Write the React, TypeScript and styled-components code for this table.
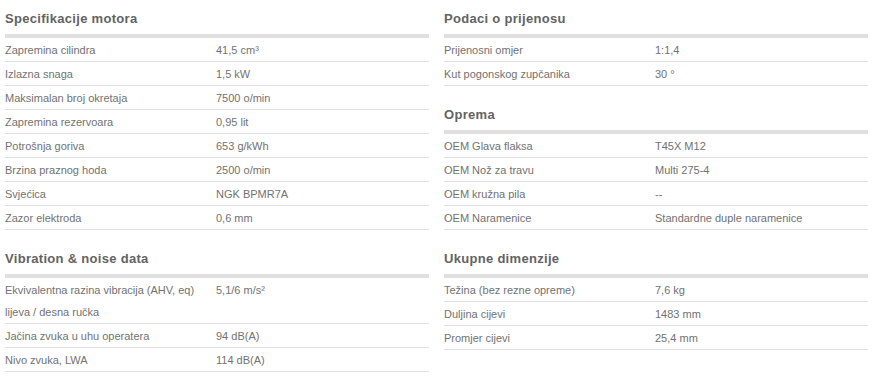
import React from "react";
import styled, { createGlobalStyle } from "styled-components";

const Global = createGlobalStyle`
  html, body { margin: 0; padding: 0; background: #ffffff; }
  body { font-family: "Liberation Sans", Arial, sans-serif; }
`;

const Page = styled.div`
  display: grid;
  grid-template-columns: 424px 424px;
  column-gap: 15px;
  padding: 0 5px;
  align-items: start;
`;

const Column = styled.div`
  display: flex;
  flex-direction: column;
  gap: 10px;
`;

const Section = styled.section`
  display: flex;
  flex-direction: column;
`;

const Heading = styled.h3`
  margin: 0 0 6px;
  padding-top: 10px;
  font-size: 13px;
  line-height: 18px;
  font-weight: bold;
  letter-spacing: 0.3px;
  color: #636363;
`;

const Bar = styled.div`
  height: 4px;
  background: #e0e0e0;
`;

const Row = styled.div`
  display: grid;
  grid-template-columns: 211px 1fr;
  border-bottom: 1px solid #e2e2e2;
  padding-top: 1px;
  font-size: 11px;
  line-height: 22px;
  color: #727272;
`;

const Label = styled.div`
  padding-right: 4px;
`;

const Value = styled.div``;

type Spec = [string, string];

const sections: { title: string; rows: Spec[] }[][] = [
  [
    {
      title: "Specifikacije motora",
      rows: [
        ["Zapremina cilindra", "41,5 cm³"],
        ["Izlazna snaga", "1,5 kW"],
        ["Maksimalan broj okretaja", "7500 o/min"],
        ["Zapremina rezervoara", "0,95 lit"],
        ["Potrošnja goriva", "653 g/kWh"],
        ["Brzina praznog hoda", "2500 o/min"],
        ["Svjećica", "NGK BPMR7A"],
        ["Zazor elektroda", "0,6 mm"],
      ],
    },
    {
      title: "Vibration & noise data",
      rows: [
        ["Ekvivalentna razina vibracija (AHV, eq) lijeva / desna ručka", "5,1/6 m/s²"],
        ["Jačina zvuka u uhu operatera", "94 dB(A)"],
        ["Nivo zvuka, LWA", "114 dB(A)"],
      ],
    },
  ],
  [
    {
      title: "Podaci o prijenosu",
      rows: [
        ["Prijenosni omjer", "1:1,4"],
        ["Kut pogonskog zupčanika", "30 °"],
      ],
    },
    {
      title: "Oprema",
      rows: [
        ["OEM Glava flaksa", "T45X M12"],
        ["OEM Nož za travu", "Multi 275-4"],
        ["OEM kružna pila", "--"],
        ["OEM Naramenice", "Standardne duple naramenice"],
      ],
    },
    {
      title: "Ukupne dimenzije",
      rows: [
        ["Težina (bez rezne opreme)", "7,6 kg"],
        ["Duljina cijevi", "1483 mm"],
        ["Promjer cijevi", "25,4 mm"],
      ],
    },
  ],
];

export default function App() {
  return (
    <>
      <Global />
      <Page>
        {sections.map((col, ci) => (
          <Column key={ci}>
            {col.map((s) => (
              <Section key={s.title}>
                <Heading>{s.title}</Heading>
                <Bar />
                {s.rows.map(([l, v]) => (
                  <Row key={l}>
                    <Label>{l}</Label>
                    <Value>{v}</Value>
                  </Row>
                ))}
              </Section>
            ))}
          </Column>
        ))}
      </Page>
    </>
  );
}
